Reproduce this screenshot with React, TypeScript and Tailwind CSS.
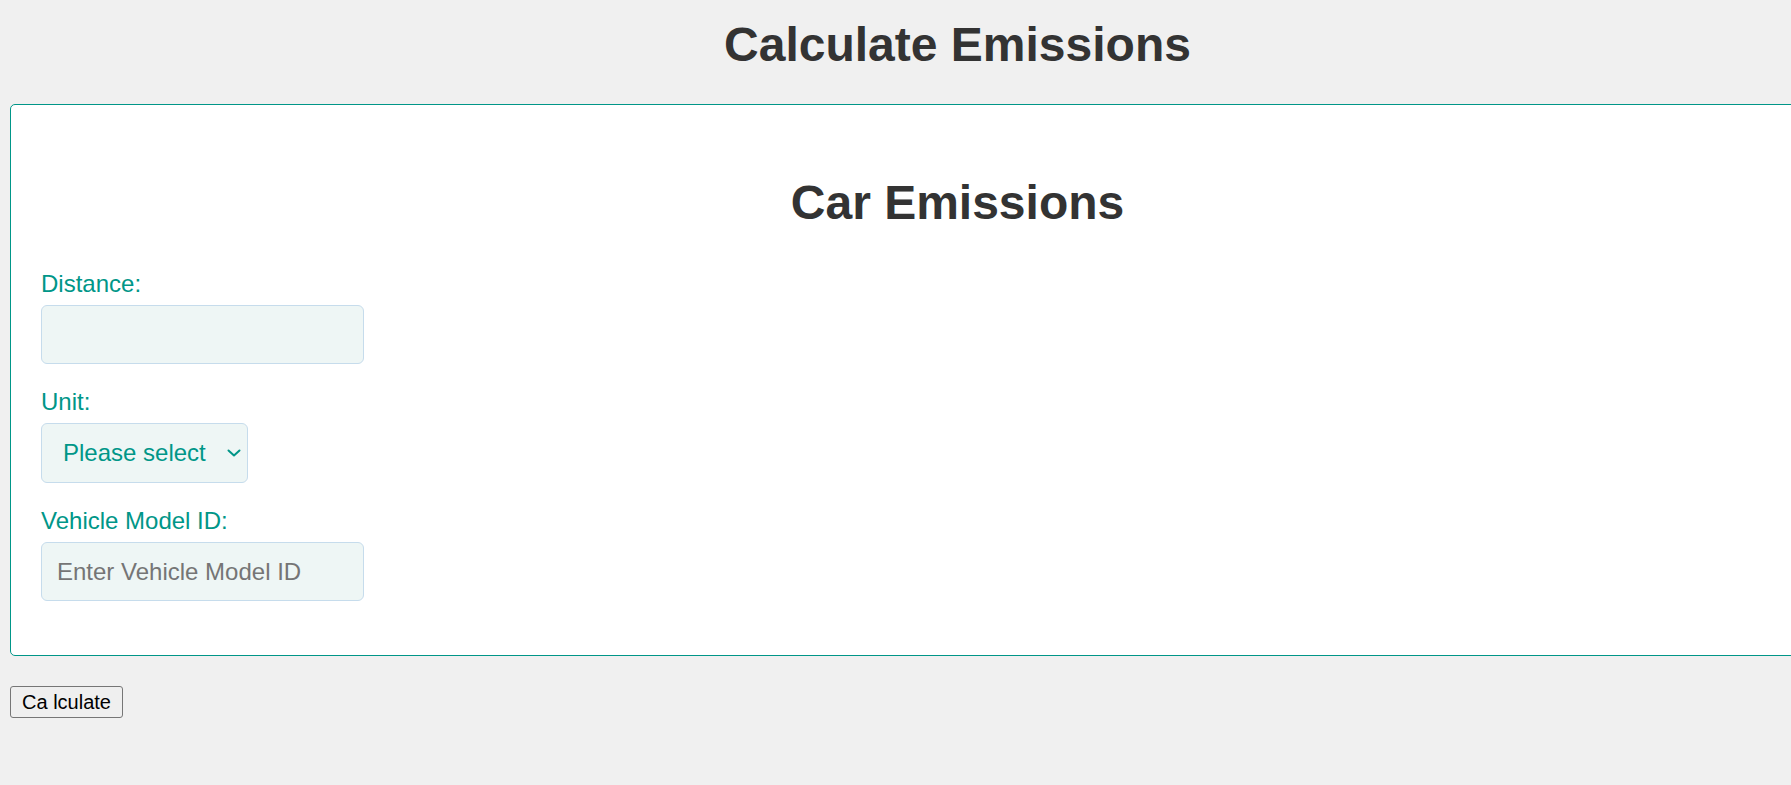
import React from "react";

export default function App() {
  return (
    <div
      className="w-full h-[785px] overflow-hidden bg-[#f0f0f0]"
      style={{ fontFamily: '"Liberation Sans", Arial, sans-serif' }}
    >
      <div className="w-[1915px]">
        <h1 className="pt-[17px] text-center text-[48px] font-bold leading-[56px] text-[#333333]">
          Calculate Emissions
        </h1>
        <div className="mx-[10px] mt-[31px] rounded-[5px] border border-[#009688] bg-white px-[30px] pt-[70px] pb-[30px]">
          <h2 className="mb-[39px] text-center text-[48px] font-bold leading-[56px] text-[#333333]">
            Car Emissions
          </h2>

          <div className="mb-[24px]">
            <label className="mb-[8px] block text-[24px] leading-[27px] text-[#009688]">
              Distance:
            </label>
            <input
              type="text"
              className="block h-[59px] w-[323px] rounded-[6px] border border-[#c6dcec] bg-[#eef6f5] px-[15px] text-[24px] text-[#009688] outline-none"
            />
          </div>

          <div className="mb-[24px]">
            <label className="mb-[8px] block text-[24px] leading-[27px] text-[#009688]">
              Unit:
            </label>
            <div className="relative w-[207px]">
              <select
                defaultValue=""
                className="block h-[60px] w-[207px] appearance-none rounded-[6px] border border-[#c6dcec] bg-[#eef6f5] pl-[21px] pr-[30px] text-[24px] text-[#009688] outline-none"
              >
                <option value="">Please select</option>
                <option value="km">km</option>
                <option value="mi">mi</option>
              </select>
              <svg
                className="pointer-events-none absolute right-[7px] top-[26px]"
                width="14"
                height="8"
                viewBox="0 0 14 8"
                fill="none"
              >
                <path
                  d="M1.5 1.5 L7 6.5 L12.5 1.5"
                  stroke="#009688"
                  strokeWidth="2"
                  strokeLinecap="round"
                  strokeLinejoin="round"
                />
              </svg>
            </div>
          </div>

          <div className="mb-[24px]">
            <label className="mb-[8px] block text-[24px] leading-[27px] text-[#009688]">
              Vehicle Model ID:
            </label>
            <input
              type="text"
              placeholder="Enter Vehicle Model ID"
              className="block h-[59px] w-[323px] rounded-[6px] border border-[#c6dcec] bg-[#eef6f5] px-[15px] text-[24px] text-[#009688] outline-none placeholder:text-[#757575]"
            />
          </div>
        </div>

        <button className="ml-[10px] mt-[30px] flex h-[32px] w-[113px] items-center justify-center rounded-[3px] border border-[#767676] bg-[#efefef] text-[20px] leading-[23px] text-black">
          Ca lculate
        </button>
      </div>
    </div>
  );
}
